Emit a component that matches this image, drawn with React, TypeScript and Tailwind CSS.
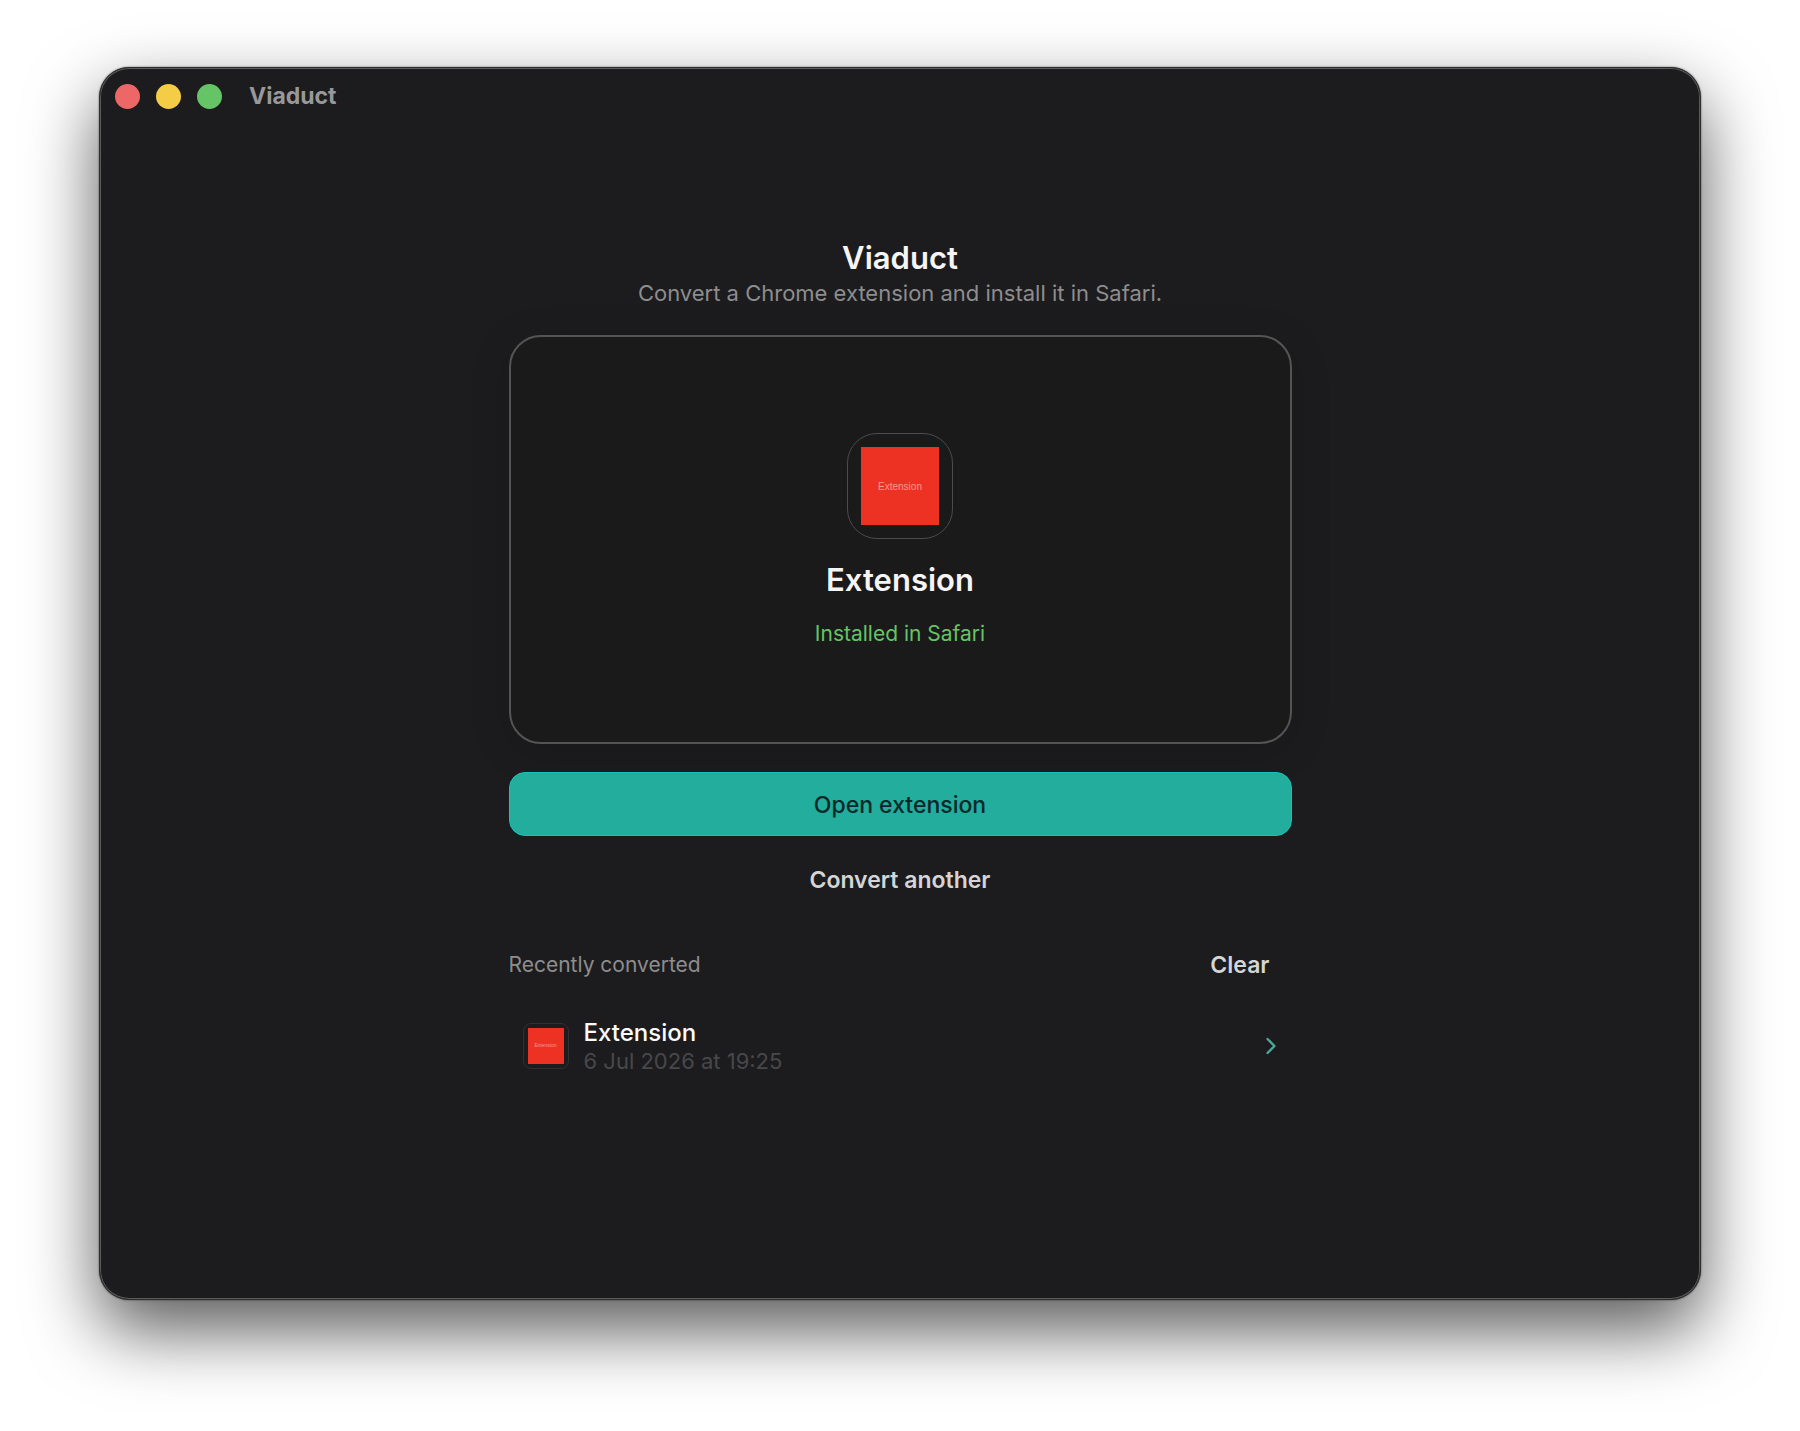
import { ChevronRight } from "lucide-react";

const recent = [{ name: "Extension", date: "6 Jul 2026 at 19:25" }];

function TitleBar() {
  return (
    <header className="flex h-14 items-center px-[15px]">
      <div className="flex gap-4">
        <button aria-label="Close" className="size-[25px] rounded-full bg-[#ec6765]" />
        <button aria-label="Minimise" className="size-[25px] rounded-full bg-[#f4cc46]" />
        <button aria-label="Zoom" className="size-[25px] rounded-full bg-[#65c466]" />
      </div>
      <span className="ml-[27px] text-[23px] leading-8 font-bold text-[#98989a]">Viaduct</span>
    </header>
  );
}

function DropCard() {
  return (
    <section className="mt-7 flex h-[409px] flex-col items-center rounded-[32px] border-2 border-[#545455] bg-[#1a1a1a] pt-24 shadow-[0_8px_40px_rgba(0,0,0,0.15)]">
      <div className="flex size-[106px] items-center justify-center rounded-[30px] border border-[#4c4c4d]">
        <div className="flex size-[78px] items-center justify-center bg-[#ed3224] font-['Liberation_Sans',sans-serif] text-[10px] text-[#f79a90]">
          Extension
        </div>
      </div>
      <h2 className="mt-[21px] text-[31px] leading-10 font-semibold text-[#f5f5f6]">Extension</h2>
      <p className="mt-5 text-[21px] leading-7 text-[#65c466]">Installed in Safari</p>
    </section>
  );
}

function RecentList() {
  return (
    <section className="mt-[45px]">
      <div className="flex items-center justify-between pr-[22px]">
        <h3 className="text-[21px] leading-8 text-[#8d8d8e]">Recently converted</h3>
        <button className="text-[23px] leading-8 font-semibold text-[#d5d5d6]">Clear</button>
      </div>
      <ul className="mt-9">
        {recent.map((item) => (
          <li key={item.name}>
            <button className="flex w-full items-center px-[14px] text-left">
              <span className="flex size-[46px] shrink-0 items-center justify-center rounded-lg border border-[#303032]">
                <span className="flex size-9 items-center justify-center bg-[#ed3224] font-['Liberation_Sans',sans-serif] text-[5px] text-[#f79a90]">
                  Extension
                </span>
              </span>
              <span className="ml-[15px] flex flex-1 flex-col pt-0.5">
                <span className="text-2xl leading-7 font-medium text-[#fafafb]">{item.name}</span>
                <span className="text-[22px] leading-7 text-[#48484a]">{item.date}</span>
              </span>
              <ChevronRight className="-mr-[7px] size-7 text-[#4ca898]" strokeWidth={2} />
            </button>
          </li>
        ))}
      </ul>
    </section>
  );
}

export default function App() {
  return (
    <div className="flex min-h-screen bg-white px-[99px] pt-[67px] pb-[131px] font-['Inter',sans-serif]">
      <div className="flex flex-1 flex-col rounded-[30px] border border-[#2c2d2d] bg-[#1c1c1e] shadow-[inset_0_0_0_1px_#5a5b5b,0_0_2px_rgba(0,0,0,0.6),0_30px_70px_rgba(0,0,0,0.65)]">
        <TitleBar />
        <main className="mx-auto flex w-full max-w-[783px] flex-col pt-[114px]">
          <h1 className="text-center text-[31px] leading-10 font-semibold text-[#f5f5f6]">Viaduct</h1>
          <p className="mt-px text-center text-[22px] leading-7 text-[#8d8d8e]">
            Convert a Chrome extension and install it in Safari.
          </p>
          <DropCard />
          <button className="mt-7 h-16 rounded-2xl border border-[#14c4b6] bg-[#22ad9d] pt-0.5 text-[23px] font-medium text-[#07292a]">
            Open extension
          </button>
          <button className="mt-5 h-12 self-center text-[23px] font-semibold text-[#d5d5d6]">
            Convert another
          </button>
          <RecentList />
        </main>
      </div>
    </div>
  );
}
